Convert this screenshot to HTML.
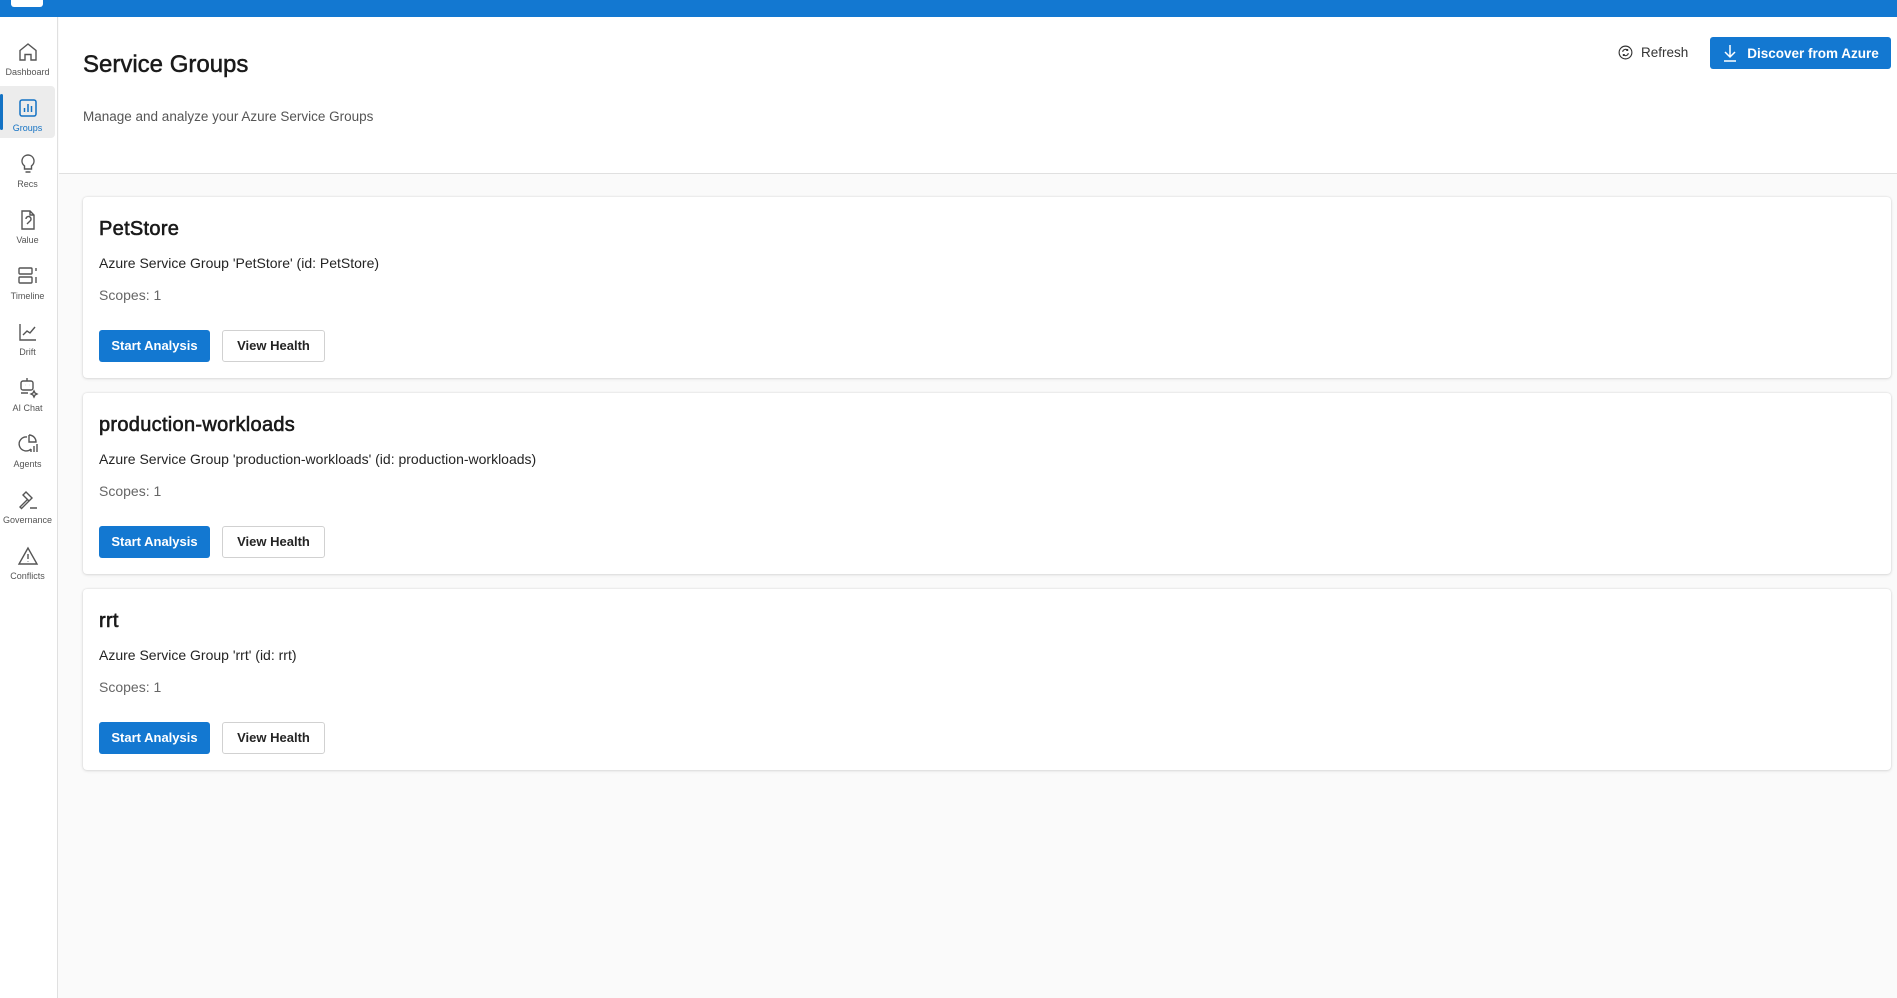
<!DOCTYPE html>
<html><head><style>
*{margin:0;padding:0;box-sizing:border-box}
body{width:1897px;height:998px;background:#fafafa;font-family:"Liberation Sans",sans-serif;position:relative;overflow:hidden;color:#242424}
.top{position:absolute;left:0;top:0;width:1897px;height:17px;background:#1378d1}
.logo{position:absolute;left:11px;top:-4px;width:32px;height:11px;background:#fff;border-radius:3px}
.side{position:absolute;left:0;top:17px;width:58px;height:981px;background:#fff;border-right:1px solid #e0e0e0}
.item{position:absolute;left:0;width:55px;height:52px;text-align:center;font-size:9px;color:#555}
.item svg{display:block;margin:10px auto 3px;width:24px;height:24px}
.sel{background:#ececec;border-radius:0 4px 4px 0;color:#1372c4}
.sel:before{content:"";position:absolute;left:0;top:8px;width:3px;height:36px;background:#1372c4;border-radius:2px}
.head{position:absolute;left:59px;top:17px;width:1838px;height:157px;background:#fff;border-bottom:1px solid #e0e0e0}
h1{position:absolute;left:24px;top:34px;font-size:24px;font-weight:normal;color:#1a1a1a;-webkit-text-stroke:.5px #1a1a1a}
.sub{position:absolute;left:24px;top:92px;font-size:13.5px;color:#555}
.ref{position:absolute;left:1617px;top:44px;font-size:13.5px;color:#333;display:flex;align-items:center;gap:7px}
.disc{position:absolute;left:1710px;top:37px;width:181px;height:32px;background:#1378d1;border-radius:3px;color:#fff;font-size:13.5px;font-weight:bold;display:flex;align-items:center;justify-content:center;gap:9px}
.card{position:absolute;left:83px;width:1808px;height:181px;background:#fff;border-radius:4px;box-shadow:0 0 2px rgba(0,0,0,.12),0 1px 3px rgba(0,0,0,.1)}
.card h2{position:absolute;left:16px;top:21px;font-size:20px;font-weight:normal;color:#1a1a1a;-webkit-text-stroke:.6px #1a1a1a;letter-spacing:.3px}
.card .d{position:absolute;left:16px;top:58px;font-size:14px;color:#242424}
.card .s{position:absolute;left:16px;top:90px;font-size:14px;color:#666}
.b1{position:absolute;left:16px;top:133px;width:111px;height:32px;background:#1378d1;color:#fff;border-radius:3px;font-size:13px;font-weight:bold;text-align:center;line-height:32px}
.b2{position:absolute;left:139px;top:133px;width:103px;height:32px;background:#fff;border:1px solid #d1d1d1;color:#242424;border-radius:3px;font-size:13px;font-weight:bold;text-align:center;line-height:30px}
</style></head><body>
<div class="top"><div class="logo"></div></div>
<div class="side">
<div class="item" style="top:13px"><svg viewBox="0 0 24 24" fill="none" stroke="#555" stroke-width="1.4"><path d="M4 10.5L12 4l8 6.5V20h-5v-5.5h-6V20H4z"/></svg>Dashboard</div>
<div class="item sel" style="top:69px"><svg viewBox="0 0 24 24" fill="none" stroke="#1372c4" stroke-width="1.5"><rect x="4" y="4" width="16" height="16" rx="2"/><path d="M8.5 16v-4M12 16V8M15.5 16v-6"/></svg>Groups</div>
<div class="item" style="top:125px"><svg viewBox="0 0 24 24" fill="none" stroke="#555" stroke-width="1.4"><path d="M12 3a6 6 0 0 0-3.5 10.9V17h7v-3.1A6 6 0 0 0 12 3zM9.5 20h5"/></svg>Recs</div>
<div class="item" style="top:181px"><svg viewBox="0 0 24 24" fill="none" stroke="#555" stroke-width="1.4"><path d="M6 3h8l4 4v14H6zM14 3v4h4M10 11a2.5 2.5 0 1 1 4 2l-3 3"/></svg>Value</div>
<div class="item" style="top:237px"><svg viewBox="0 0 24 24" fill="none" stroke="#555" stroke-width="1.4"><rect x="3" y="4" width="13" height="6" rx="1"/><rect x="3" y="13" width="13" height="6" rx="1"/><path d="M20 4v3M20 13v6"/></svg>Timeline</div>
<div class="item" style="top:293px"><svg viewBox="0 0 24 24" fill="none" stroke="#555" stroke-width="1.4"><path d="M4 4v16h16M7 15l4-4 3 2 5-6"/></svg>Drift</div>
<div class="item" style="top:349px"><svg viewBox="0 0 24 24" fill="none" stroke="#555" stroke-width="1.4"><rect x="5" y="5" width="12" height="9" rx="2"/><path d="M11 2v3M9 9h.1M13 9h.1M5 17h7M18 15l1 2 2 1-2 1-1 2-1-2-2-1 2-1z"/></svg>AI Chat</div>
<div class="item" style="top:405px"><svg viewBox="0 0 24 24" fill="none" stroke="#555" stroke-width="1.4"><path d="M11 5a7 7 0 1 0 4 12M13 3v7h7a7 7 0 0 0-7-7M15 20v-3M18 20v-6M21 20v-8"/></svg>Agents</div>
<div class="item" style="top:461px"><svg viewBox="0 0 24 24" fill="none" stroke="#555" stroke-width="1.4"><path d="M10 4l6 6-3 3-6-6zM11.5 11.5L4 19l1.5 1.5L13 13M14 20h7"/></svg>Governance</div>
<div class="item" style="top:517px"><svg viewBox="0 0 24 24" fill="none" stroke="#555" stroke-width="1.4"><path d="M12 4L3 20h18zM12 10v5M12 17.5v.5"/></svg>Conflicts</div>
</div>
<div class="head">
<h1>Service Groups</h1>
<div class="sub">Manage and analyze your Azure Service Groups</div>
</div>
<div class="ref"><svg width="17" height="17" viewBox="0 0 24 24" fill="none" stroke="#333" stroke-width="1.6"><circle cx="12" cy="12" r="9"/><path d="M8 11a4 4 0 0 1 7-2M16 13a4 4 0 0 1-7 2M15 7v2h-2M9 17v-2h2"/></svg>Refresh</div>
<div class="disc"><svg width="16" height="18" viewBox="0 0 16 18" fill="none" stroke="#fff" stroke-width="1.5"><path d="M8 1v12M3 8l5 5 5-5M2 17h12"/></svg>Discover from Azure</div>

<div class="card" style="top:197px"><h2>PetStore</h2><div class="d">Azure Service Group 'PetStore' (id: PetStore)</div><div class="s">Scopes: 1</div><div class="b1">Start Analysis</div><div class="b2">View Health</div></div>
<div class="card" style="top:393px"><h2>production-workloads</h2><div class="d">Azure Service Group 'production-workloads' (id: production-workloads)</div><div class="s">Scopes: 1</div><div class="b1">Start Analysis</div><div class="b2">View Health</div></div>
<div class="card" style="top:589px"><h2>rrt</h2><div class="d">Azure Service Group 'rrt' (id: rrt)</div><div class="s">Scopes: 1</div><div class="b1">Start Analysis</div><div class="b2">View Health</div></div>
</body></html>
